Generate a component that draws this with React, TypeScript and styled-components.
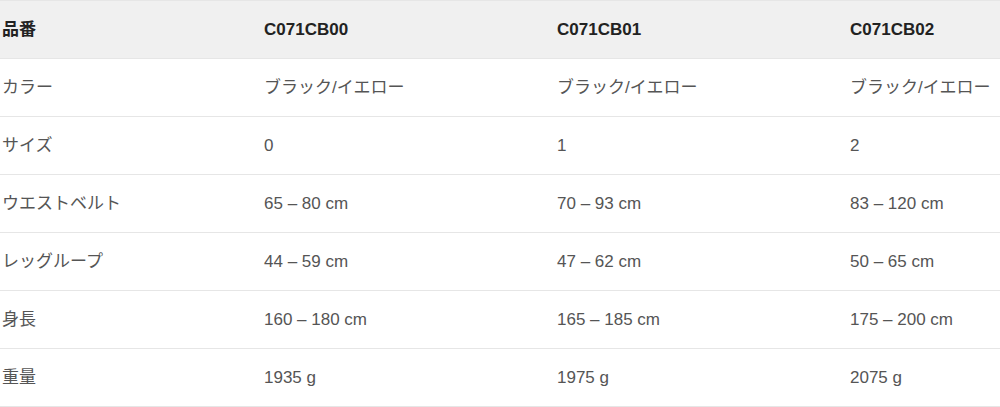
import React from 'react';
import styled, { createGlobalStyle } from 'styled-components';

const GlobalStyle = createGlobalStyle`
  html, body {
    margin: 0;
    padding: 0;
    background: #fff;
    overflow: hidden;
  }
  body {
    font-family: "Liberation Sans", Arial, "Noto Sans CJK JP", sans-serif;
  }
`;

const specs = {
  head: ['品番', 'C071CB00', 'C071CB01', 'C071CB02'],
  rows: [
    ['カラー', 'ブラック/イエロー', 'ブラック/イエロー', 'ブラック/イエロー'],
    ['サイズ', '0', '1', '2'],
    ['ウエストベルト', '65 – 80 cm', '70 – 93 cm', '83 – 120 cm'],
    ['レッグループ', '44 – 59 cm', '47 – 62 cm', '50 – 65 cm'],
    ['身長', '160 – 180 cm', '165 – 185 cm', '175 – 200 cm'],
    ['重量', '1935 g', '1975 g', '2075 g'],
  ],
};

const App = () => {
  return (
    <>
      <GlobalStyle />
      <Wrapper>
        <Table>
          <Row $head>
            {specs.head.map((cell) => (
              <Cell key={cell} $head>
                {cell}
              </Cell>
            ))}
          </Row>
          {specs.rows.map((row) => (
            <Row key={row[0]}>
              {row.map((cell, i) => (
                <Cell key={i}>{cell}</Cell>
              ))}
            </Row>
          ))}
        </Table>
      </Wrapper>
    </>
  );
};

export default App;

const Wrapper = styled.div`
  width: 1000px;
  overflow: hidden;
`;

const Table = styled.div`
  width: 1141px;
  border-top: 1px solid #e6e6e6;
`;

const Row = styled.div<{ $head?: boolean }>`
  display: grid;
  grid-template-columns: 262px 293px 293px 293px;
  align-items: center;
  height: 57px;
  border-bottom: 1px solid #e6e6e6;
  background: ${(p) => (p.$head ? '#f0f0f0' : '#fff')};
`;

const Cell = styled.div<{ $head?: boolean }>`
  padding-left: 2px;
  font-size: 17px;
  line-height: 20px;
  white-space: nowrap;
  font-weight: ${(p) => (p.$head ? 700 : 400)};
  color: ${(p) => (p.$head ? '#222' : '#555')};
`;
